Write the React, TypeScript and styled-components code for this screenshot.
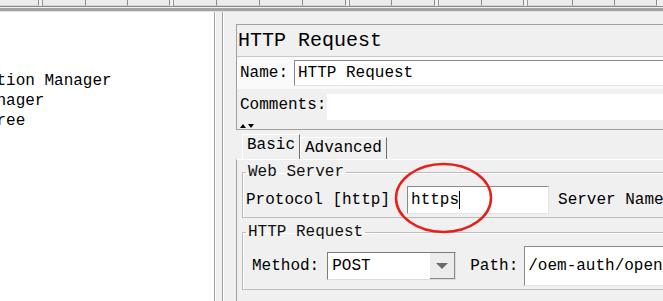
import styled, { createGlobalStyle } from 'styled-components'

const GlobalStyle = createGlobalStyle`
  html, body {
    margin: 0;
    padding: 0;
  }
  body {
    background: #f0f0f0;
    font-family: 'Liberation Mono', 'DejaVu Sans Mono', monospace;
    font-size: 16px;
    color: #000;
  }
`

const Window = styled.div`
  position: relative;
  width: 663px;
  height: 301px;
  overflow: hidden;
  display: flex;
  flex-direction: column;
  background: #f0f0f0;
`

const Toolbar = styled.div`
  display: flex;
  height: 6px;
  flex-shrink: 0;
  overflow: hidden;
  border-bottom: 1px solid #8a8a8a;
`

const ToolGroup = styled.div`
  display: flex;
  border-left: 1px solid #9a9a9a;
  margin-left: 3px;

  &:first-child {
    border-left: none;
    margin-left: 0;
  }
`

const ToolButton = styled.div<{ $w: number }>`
  width: ${({ $w }) => $w}px;
  height: 6px;
  box-sizing: border-box;
  background: #ececec;
  border-right: 1px solid #8c8c8c;
  border-bottom: 1px solid #d4d4d4;
`

const ToolbarEdge = styled.div`
  height: 3px;
  flex-shrink: 0;
  margin-top: 1px;
  background: #a2a2a2;
  border-bottom: 1px solid #e2e2e2;
`

const Main = styled.div`
  flex: 1;
  display: flex;
  min-height: 0;
`

// the tree is scrolled sideways, so the start of each label is hidden
const TreePane = styled.div`
  width: 215px;
  flex-shrink: 0;
  background: #fff;
  border-right: 1px solid #a0a0a0;
  overflow: hidden;
  padding-top: 59px;
  box-sizing: border-box;
`

const TreeList = styled.ul`
  list-style: none;
  margin: 0 0 0 -138px;
  padding: 0;
  white-space: nowrap;
`

const TreeItem = styled.li`
  height: 20px;
  line-height: 20px;
`

const Splitter = styled.div`
  width: 6px;
  flex-shrink: 0;
  border-left: 1px solid #fff;
  border-right: 1px solid #a0a0a0;
  margin-right: 1px;
  box-shadow: 1px 0 0 #fff;
`

const RightPane = styled.div`
  flex: 1;
  min-width: 0;
  overflow: hidden;
  padding: 12px 0 0 12px;
  display: flex;
  flex-direction: column;
`

const HeaderBox = styled.div`
  border-top: 1px solid #a0a0a0;
  border-left: 1px solid #a0a0a0;
  margin-right: -20px;
`

const Title = styled.div`
  height: 31px;
  line-height: 31px;
  font-size: 20px;
  padding-left: 1px;
  border-bottom: 1px solid #c8c8c8;
`

const FormRow = styled.div<{ $white?: boolean }>`
  display: flex;
  align-items: center;
  height: 32px;
  padding-left: 3px;
  background: ${({ $white }) => ($white ? '#fafafa' : '#f0f0f0')};
`

const Label = styled.span<{ $w?: number }>`
  flex-shrink: 0;
  white-space: pre;
  ${({ $w }) => ($w ? `width: ${$w}px;` : '')}
`

const TextField = styled.div<{ $h?: number; $w?: number }>`
  box-sizing: border-box;
  height: ${({ $h }) => $h ?? 26}px;
  ${({ $w }) => ($w ? `width: ${$w}px; flex-shrink: 0;` : 'flex: 1;')}
  display: flex;
  align-items: center;
  padding-left: 3px;
  background: #fff;
  border: 1px solid;
  border-color: #8a8a8a #e4e4e4 #e4e4e4 #8a8a8a;
  white-space: nowrap;
  overflow: hidden;
`

const CommentArea = styled.div`
  flex: 1;
  align-self: flex-end;
  height: 26px;
  margin-bottom: 1px;
  margin-left: 1px;
  background: #fff;
`

const ArrowRow = styled.div`
  display: flex;
  gap: 2px;
  align-items: flex-end;
  height: 7px;
  padding: 0 0 1px 3px;
  border-bottom: 1px solid #a0a0a0;
`

const Arrow = styled.span<{ $down?: boolean }>`
  width: 0;
  height: 0;
  border-left: 3.5px solid transparent;
  border-right: 3.5px solid transparent;
  ${({ $down }) =>
    $down ? 'border-top: 4px solid #000;' : 'border-bottom: 4px solid #000;'}
`

const TabArea = styled.div`
  margin-top: 3px;
  flex: 1;
  display: flex;
  flex-direction: column;
`

const TabStrip = styled.div`
  display: flex;
  align-items: flex-end;
  height: 26px;
  padding-left: 6px;
`

const Tab = styled.div<{ $active?: boolean }>`
  box-sizing: border-box;
  height: ${({ $active }) => ($active ? 25 : 22)}px;
  line-height: ${({ $active }) => ($active ? 21 : 21)}px;
  padding: 0 4px;
  border-top: 1px solid #fff;
  border-left: 1px solid #fff;
  border-right: 1px solid #6e6e6e;
  background: #f0f0f0;
`

const TabBody = styled.div`
  flex: 1;
  border-top: 1px solid #fff;
  border-left: 1px solid #a0a0a0;
  padding: 3px 0 0 5px;
  display: flex;
  flex-direction: column;
  gap: 5px;
`

const Group = styled.fieldset`
  margin: 0 -30px 0 0;
  padding: 0 3px 3px 3px;
  border: 1px solid #bcbcbc;
  box-shadow: inset 1px 1px 0 #fff;
  min-width: 0;
`

const GroupTitle = styled.legend`
  padding: 0 2px;
  line-height: 18px;
  font-size: 16px;
  color: #111;
`

const FieldRow = styled.div<{ $top: number; $indent?: number }>`
  display: flex;
  align-items: center;
  margin-top: ${({ $top }) => $top}px;
  padding-left: ${({ $indent }) => $indent ?? 0}px;
  white-space: nowrap;
`

const Caret = styled.span`
  display: inline-block;
  width: 1px;
  height: 18px;
  background: #000;
`

const Combo = styled.div`
  box-sizing: border-box;
  display: flex;
  width: 129px;
  height: 28px;
  flex-shrink: 0;
  background: #fff;
  border: 1px solid;
  border-color: #7a7a7a #dcdcdc #dcdcdc #7a7a7a;
`

const ComboValue = styled.span`
  flex: 1;
  line-height: 26px;
  padding-left: 4px;
`

const ComboButton = styled.span`
  width: 24px;
  display: flex;
  align-items: center;
  justify-content: center;
  background: #ececec;
  border-right: 1px solid #8a8a8a;
  border-bottom: 1px solid #8a8a8a;

  &::after {
    content: '';
    border-left: 6px solid transparent;
    border-right: 6px solid transparent;
    border-top: 6px solid #6a6a6a;
  }
`

const Annotation = styled.svg`
  position: absolute;
  left: 394px;
  top: 162px;
  pointer-events: none;
`

const toolGroups = [[39], [43, 42, 42], [43, 43, 43, 43], [42, 43], [43, 42], [45, 42, 42]]

const treeItems = [
  'HTTP Authorization Manager',
  'HTTP Header Manager',
  'View Results Tree',
]

const App = () => {
  return (
    <>
      <GlobalStyle />
      <Window>
        <Toolbar>
          {toolGroups.map((group, i) => (
            <ToolGroup key={i}>
              {group.map((w, j) => (
                <ToolButton key={j} $w={w} />
              ))}
            </ToolGroup>
          ))}
        </Toolbar>
        <ToolbarEdge />

        <Main>
          <TreePane>
            <TreeList>
              {treeItems.map((item) => (
                <TreeItem key={item}>{item}</TreeItem>
              ))}
            </TreeList>
          </TreePane>
          <Splitter />

          <RightPane>
            <HeaderBox>
              <Title>HTTP Request</Title>
              <FormRow $white>
                <Label $w={54}>Name:</Label>
                <TextField>HTTP Request</TextField>
              </FormRow>
              <FormRow>
                <Label $w={86}>Comments:</Label>
                <CommentArea />
              </FormRow>
              <ArrowRow>
                <Arrow />
                <Arrow $down />
              </ArrowRow>
            </HeaderBox>

            <TabArea>
              <TabStrip>
                <Tab $active>Basic</Tab>
                <Tab>Advanced</Tab>
              </TabStrip>
              <TabBody>
                <Group>
                  <GroupTitle>Web Server</GroupTitle>
                  <FieldRow $top={5}>
                    <Label>Protocol [http]</Label>
                    <TextField $w={142} $h={28} style={{ marginLeft: 17 }}>
                      https
                      <Caret />
                    </TextField>
                    <Label style={{ marginLeft: 9 }}>Server Name or IP:</Label>
                  </FieldRow>
                </Group>
                <Group>
                  <GroupTitle>HTTP Request</GroupTitle>
                  <FieldRow $top={5} $indent={6}>
                    <Label>Method:</Label>
                    <Combo style={{ marginLeft: 8 }}>
                      <ComboValue>POST</ComboValue>
                      <ComboButton />
                    </Combo>
                    <Label style={{ marginLeft: 14 }}>Path:</Label>
                    <TextField $h={40} style={{ marginLeft: 6 }}>
                      /oem-auth/openapi/token
                    </TextField>
                  </FieldRow>
                </Group>
              </TabBody>
            </TabArea>
          </RightPane>
        </Main>

        <Annotation width="99" height="72" viewBox="0 0 99 72">
          <ellipse cx="49.5" cy="36" rx="47.5" ry="34" fill="none" stroke="#e52018" strokeWidth="2.5" />
        </Annotation>
      </Window>
    </>
  )
}

export default App
